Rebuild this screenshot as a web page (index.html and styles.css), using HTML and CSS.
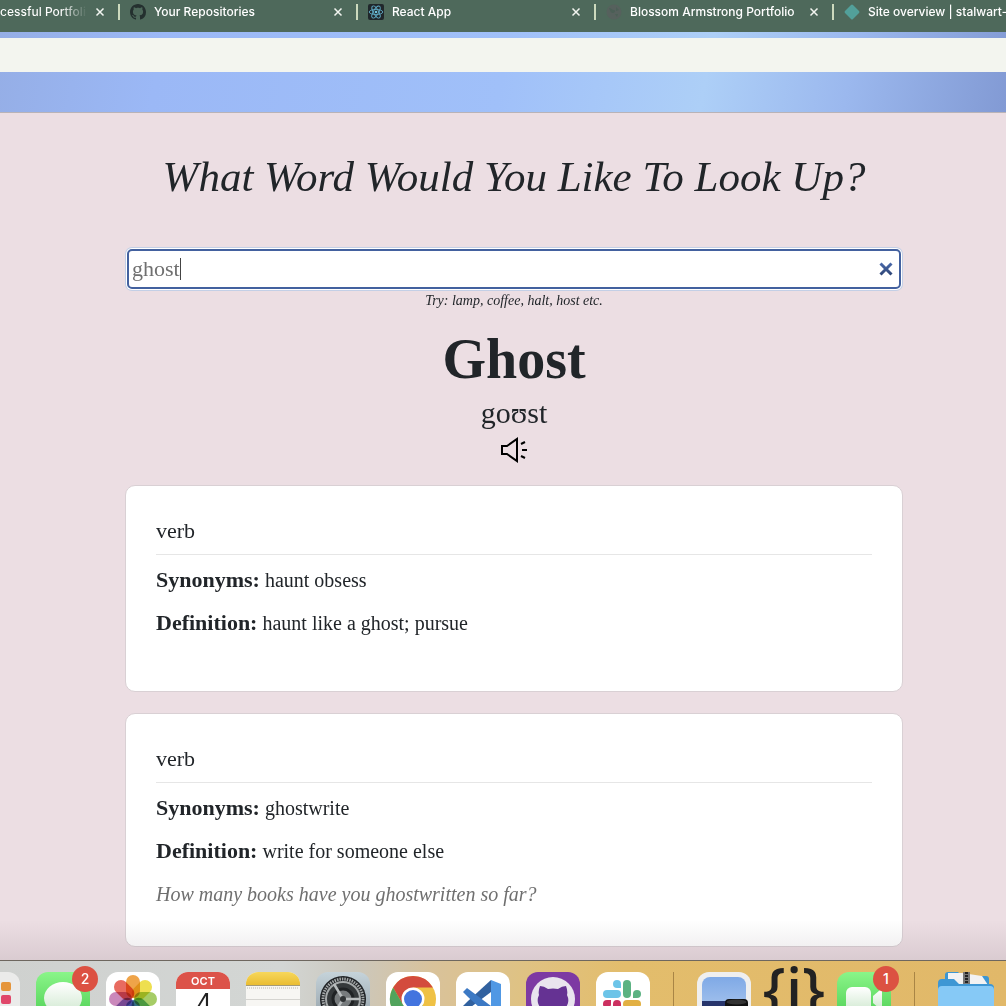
FILE: index.html
```html
<!DOCTYPE html>
<html lang="en">
<head>
<meta charset="utf-8">
<meta name="viewport" content="width=device-width, initial-scale=1">
<title>Dictionary</title>
<link rel="stylesheet" href="styles.css">
</head>
<body>
<nav class="tabs" aria-label="Browser tabs">
  <div class="tab tab-first">
    <a class="tab-title fade" href="#">cessful Portfolio</a>
    <button class="tab-close" aria-label="Close tab"><svg viewBox="0 0 10 10"><path d="M1.500 1.500l7 7M8.500 1.500l-7 7"/></svg></button>
  </div>
  <div class="tab">
    <svg class="favicon" viewBox="0 0 16 16"><path fill="#24302f" d="M8 0C3.580 0 0 3.580 0 8c0 3.540 2.290 6.530 5.470 7.590.4.070.55-.17.55-.38 0-.19-.01-.82-.01-1.490-2.010.37-2.530-.49-2.690-.94-.09-.23-.48-.94-.82-1.130-.28-.15-.68-.52-.01-.53.63-.01 1.080.58 1.230.82.72 1.210 1.870.87 2.330.66.070-.52.28-.87.51-1.070-1.780-.2-3.640-.89-3.640-3.950 0-.87.31-1.590.82-2.150-.08-.2-.36-1.020.08-2.120 0 0 .67-.21 2.200.82.64-.18 1.320-.27 2-.27s1.360.09 2 .27c1.530-1.040 2.200-.82 2.200-.82.44 1.100.16 1.920.08 2.120.51.56.82 1.270.82 2.150 0 3.070-1.870 3.750-3.650 3.950.29.25.54.73.54 1.480 0 1.070-.01 1.930-.01 2.200 0 .21.15.46.55.38A8.010 8.010 0 0 0 16 8c0-4.420-3.580-8-8-8z"/></svg>
    <a class="tab-title" href="#">Your Repositories</a>
    <button class="tab-close" aria-label="Close tab"><svg viewBox="0 0 10 10"><path d="M1.500 1.500l7 7M8.500 1.500l-7 7"/></svg></button>
  </div>
  <div class="tab">
    <svg class="favicon" viewBox="0 0 16 16"><rect width="16" height="16" rx="2" fill="#20272b"/><g fill="none" stroke="#5fa9c4" stroke-width=".9"><ellipse cx="8" cy="8" rx="6.800" ry="2.600"/><ellipse cx="8" cy="8" rx="6.800" ry="2.600" transform="rotate(60 8 8)"/><ellipse cx="8" cy="8" rx="6.800" ry="2.600" transform="rotate(120 8 8)"/></g><circle cx="8" cy="8" r="1.300" fill="#6fc3de"/></svg>
    <a class="tab-title" href="#">React App</a>
    <button class="tab-close" aria-label="Close tab"><svg viewBox="0 0 10 10"><path d="M1.500 1.500l7 7M8.500 1.500l-7 7"/></svg></button>
  </div>
  <div class="tab">
    <svg class="favicon" viewBox="0 0 16 16"><circle cx="8" cy="8" r="7.500" fill="#56615d"/><path d="M3 4c2 0 3 2 5 2s1 3-1 3-3-2-4-5zM10 3l3 3-3 1zM9 10l3 0-1 3z" fill="#4b5f56"/></svg>
    <a class="tab-title" href="#">Blossom Armstrong Portfolio</a>
    <button class="tab-close" aria-label="Close tab"><svg viewBox="0 0 10 10"><path d="M1.500 1.500l7 7M8.500 1.500l-7 7"/></svg></button>
  </div>
  <div class="tab tab-last">
    <svg class="favicon" viewBox="0 0 16 16"><path d="M7 1q1-1 2 0l6 6q1 1 0 2l-6 6q-1 1-2 0l-6-6q-1-1 0-2z" fill="#52a09a"/></svg>
    <a class="tab-title" href="#">Site overview | stalwart-s</a>
  </div>
</nav>
<div class="wallpaper"><div class="toolbar"></div></div>

<main class="page">
  <h1 class="title"><label for="word">What Word Would You Like To Look Up?</label></h1>
  <form class="search">
    <span class="field"><input id="word" type="text" value="ghost" autocomplete="off"><i class="caret"></i></span>
    <button class="clear" type="reset" aria-label="Clear"><svg viewBox="0 0 14 14"><defs><linearGradient id="cl" gradientUnits="userSpaceOnUse" x1="0" y1="0" x2="0" y2="14"><stop offset="0" stop-color="#4c6cae"/><stop offset="1" stop-color="#2b4272"/></linearGradient></defs><path d="M1.500 1.500l11 11M12.500 1.500l-11 11" stroke="url(#cl)" stroke-width="3"/></svg></button>
  </form>
  <p class="hint">Try: lamp, coffee, halt, host etc.</p>
  <h2 class="word">Ghost</h2>
  <p class="phonetic">goʊst</p>
  <button class="listen" aria-label="Listen"><svg viewBox="0 0 28 26"><path d="M2 9v8h5l10 7V2L7 9zM21 7l4-2M22 13h5M21 19l4 2" fill="none" stroke="#000" stroke-width="2"/></svg></button>

  <section class="card">
    <h3 class="part">verb</h3>
    <p class="row"><strong>Synonyms:</strong> haunt obsess</p>
    <p class="row"><strong>Definition:</strong> haunt like a ghost; pursue</p>
    <p class="row example"></p>
  </section>
  <section class="card">
    <h3 class="part">verb</h3>
    <p class="row"><strong>Synonyms:</strong> ghostwrite</p>
    <p class="row"><strong>Definition:</strong> write for someone else</p>
    <p class="row example">How many books have you ghostwritten so far?</p>
  </section>
</main>

<footer class="dock">
  <div class="app app-first"><svg viewBox="0 0 54 54"><rect width="54" height="54" rx="12" fill="#ebebea"/><rect x="35" y="10" width="10" height="9" rx="2" fill="#e5953b"/><rect x="35" y="23" width="10" height="9" rx="2" fill="#e0476a"/></svg></div>
  <div class="app"><svg viewBox="0 0 54 54"><defs><linearGradient id="gr" x2="0" y2="1"><stop stop-color="#8af589"/><stop offset="1" stop-color="#45c94b"/></linearGradient><linearGradient id="wh" x2="0" y2="1"><stop stop-color="#fff"/><stop offset="1" stop-color="#cfe8cf"/></linearGradient></defs><rect width="54" height="54" rx="12" fill="url(#gr)"/><ellipse cx="27" cy="26" rx="19" ry="16" fill="url(#wh)"/></svg><span class="badge">2</span></div>
  <div class="app"><svg viewBox="0 0 54 54"><rect width="54" height="54" rx="12" fill="#fff"/><g class="petals"><rect x="20" y="3" width="14" height="23" rx="7" fill="#ee9a35"/><rect x="20" y="3" width="14" height="23" rx="7" fill="#ecdc3c" transform="rotate(45 27 27)"/><rect x="20" y="3" width="14" height="23" rx="7" fill="#9cc755" transform="rotate(90 27 27)"/><rect x="20" y="3" width="14" height="23" rx="7" fill="#65b894" transform="rotate(135 27 27)"/><rect x="20" y="3" width="14" height="23" rx="7" fill="#6488cd" transform="rotate(180 27 27)"/><rect x="20" y="3" width="14" height="23" rx="7" fill="#8a78c0" transform="rotate(225 27 27)"/><rect x="20" y="3" width="14" height="23" rx="7" fill="#c47bb4" transform="rotate(270 27 27)"/><rect x="20" y="3" width="14" height="23" rx="7" fill="#e65b4f" transform="rotate(315 27 27)"/></g></svg></div>
  <div class="app calendar"><span class="month">OCT</span><span class="day">4</span></div>
  <div class="app"><svg viewBox="0 0 54 54"><defs><linearGradient id="ye" x2="0" y2="1"><stop stop-color="#f7d75b"/><stop offset="1" stop-color="#eabd32"/></linearGradient></defs><rect width="54" height="54" rx="12" fill="#f7f6f3"/><path d="M0 13v-1A12 12 0 0 1 12 0h30a12 12 0 0 1 12 12v1z" fill="url(#ye)"/><path d="M0 13.500h54" stroke="#a49b78"/><path d="M1 16h52" stroke="#bbb8ae" stroke-dasharray="1 1"/><path d="M0 27.500h54M0 41.500h54" stroke="#d5d4d0"/></svg></div>
  <div class="app"><svg viewBox="0 0 54 54"><defs><linearGradient id="st" x2="0" y2="1"><stop stop-color="#c5d3da"/><stop offset="1" stop-color="#8e9aa2"/></linearGradient></defs><rect width="54" height="54" rx="12" fill="url(#st)"/><circle cx="27" cy="27" r="23" fill="#202326"/><circle cx="27" cy="27" r="20" fill="none" stroke="#a4a8a9" stroke-width="3" stroke-dasharray="1.500 1"/><circle cx="27" cy="27" r="17" fill="#35393b" stroke="#a4a8a9" stroke-width="2"/><circle cx="27" cy="27" r="10" fill="#777b7d" stroke="#1f2224" stroke-width="3"/><path d="M27 27h17M27 27l-9-15M27 27l-9 15" stroke="#b8bcbd" stroke-width="2.500"/><circle cx="27" cy="27" r="3" fill="#303335"/></svg></div>
  <div class="app"><svg viewBox="0 0 54 54"><rect width="54" height="54" rx="12" fill="#fff"/><circle cx="27" cy="27" r="23" fill="#efc145"/><path d="M7.080 15.500A23 23 0 0 1 46.920 15.500H27L17.040 32.750z" fill="#d34b3d"/><path d="M7.080 15.500A23 23 0 0 0 27 50l9.960-17.250H17.040z" fill="#51a35c"/><circle cx="27" cy="27" r="11.500" fill="#fff"/><circle cx="27" cy="27" r="9" fill="#4374df"/></svg></div>
  <div class="app"><svg viewBox="0 0 54 54"><rect width="54" height="54" rx="12" fill="#fff"/><path d="M35 8L12 29l-5 5 4 4 28-21z" fill="#31619f"/><path d="M7 20l4-4 28 21-4 9L12 25z" fill="#3c79c4"/><path d="M35 8l10 4v30l-10 4z" fill="#5098e4"/></svg></div>
  <div class="app"><svg viewBox="0 0 54 54"><rect width="54" height="54" rx="12" fill="#7d39a3"/><circle cx="27" cy="27" r="22" fill="#e9e4ee"/><path d="M14 14q4 0 8 3 5-1 10 0 4-3 8-3 2 5 1 9 2 4 1 8-2 7-10 8v15H22V39q-8-1-10-8-1-4 1-8-1-4 1-9z" fill="#653293"/></svg></div>
  <div class="app"><svg viewBox="0 0 54 54"><rect width="54" height="54" rx="12" fill="#fff"/><path d="M25 16h-4a4 4 0 1 1 4-4z" fill="#6cc4e8"/><rect x="7" y="18" width="18" height="8" rx="4" fill="#6cc4e8"/><rect x="27" y="8" width="8" height="18" rx="4" fill="#5bb282"/><path d="M37 26v-4a4 4 0 1 1 4 4z" fill="#5bb282"/><path d="M15 28v4a4 4 0 1 1-4-4z" fill="#cc3060"/><rect x="17" y="28" width="8" height="18" rx="4" fill="#cc3060"/><rect x="27" y="28" width="18" height="8" rx="4" fill="#e2b043"/></svg></div>
  <div class="divider"></div>
  <div class="app"><svg viewBox="0 0 54 54"><defs><linearGradient id="sk" x2="0" y2="1"><stop stop-color="#7fa9e6"/><stop offset="1" stop-color="#b3cdf0"/></linearGradient></defs><rect width="54" height="54" rx="12" fill="#efefef"/><rect x="5" y="5" width="44" height="44" rx="8" fill="url(#sk)"/><path d="M5 29h44v20H5z" fill="#27356c"/><rect x="28" y="27" width="23" height="16" rx="4" fill="#111"/><ellipse cx="39.500" cy="30" rx="10" ry="2.500" fill="#333"/></svg></div>
  <div class="app braces">{i}</div>
  <div class="app"><svg viewBox="0 0 54 54"><rect width="54" height="54" rx="12" fill="url(#gr)"/><rect x="9" y="15" width="25" height="25" rx="6" fill="url(#wh)"/><path d="M36 24l7-6q2-1 2 1v17q0 2-2 1l-7-6z" fill="url(#wh)"/></svg><span class="badge">1</span></div>
  <div class="divider"></div>
  <div class="app folder"><svg viewBox="0 0 56 54"><path d="M7 12V3q0-3 3-3h10l4 4h24q3 0 3 3v5z" fill="#3c96d2"/><path d="M10 1h14l20 3 6 9H10z" fill="#f2f2f2"/><path d="M25 0h7v12h-7z" fill="#777"/><path d="M28.500 0v12" stroke="#222" stroke-width="3" stroke-dasharray="2 1"/><path d="M0 16v-5q0-4 4-4h12l5 5h31q4 0 4 4v4H0z" fill="#3e97d4"/><rect y="14" width="56" height="44" rx="4" fill="#86c9f6"/></svg></div>
</footer>
</body>
</html>
```
FILE: styles.css
```css
* { box-sizing: border-box; }

body {
  margin: 0;
  height: 100vh;
  display: flex;
  flex-direction: column;
  overflow: hidden;
  font-family: "Liberation Serif", serif;
  color: #212529;
}

button {
  padding: 0;
  border: 0;
  background: none;
  display: block;
}

svg { display: block; }

/* Browser tab strip */
.tabs {
  flex: none;
  height: 32px;
  display: flex;
  overflow: hidden;
  background: #4e695b;
  font: 500 12px/16px Roboto, sans-serif;
}

.tab {
  flex: none;
  width: 238px;
  height: 16px;
  margin-top: 4px;
  padding: 0 13px 0 10px;
  display: flex;
  align-items: center;
  gap: 8px;
  border-left: 2px solid #ccd9bd;
}

.tab-first {
  width: 118px;
  padding-left: 0;
  border-left: 0;
}

.tab-last {
  flex: 1;
  min-width: 0;
  padding-right: 0;
}

.favicon { flex: none; width: 16px; height: 16px; }

.tab-title {
  flex: 1;
  min-width: 0;
  overflow: hidden;
  white-space: nowrap;
  color: #fff;
  text-decoration: none;
  font: 500 12px/16px Inter, sans-serif;
}

.fade {
  background: linear-gradient(90deg, #fff 70%, #4e695b);
  background-clip: text;
  color: transparent;
}

.tab-close svg {
  width: 10px;
  height: 10px;
  fill: none;
  stroke: #f2f5f0;
  stroke-width: 1.5;
}

.wallpaper {
  flex: none;
  height: 81px;
  padding-top: 6px;
  border-bottom: 1px solid #b9b3b7;
  background: linear-gradient(100deg, #95aee6, #9bb8f6 16%, #a0c0f9 50%, #adcff7 70%, #9bb8ee 84%, #829ad4);
}

.toolbar { height: 34px; background: #f3f5ef; }

/* Dictionary page */
.page {
  position: relative;
  flex: 1;
  min-height: 0;
  overflow: hidden;
  padding: 40px 103px 0 125px;
  background: #ecdee3;
}

.page::after {
  content: "";
  position: absolute;
  inset: auto 0 0;
  height: 40px;
  background: linear-gradient(transparent, rgba(60, 40, 50, .1));
}

.title {
  margin: 0 0 48px;
  font-size: 43px;
  line-height: 48px;
  font-weight: 400;
  font-style: italic;
  text-align: center;
  white-space: nowrap;
}

.search {
  height: 40px;
  margin: 0 2px;
  padding: 0 6px 0 3px;
  display: flex;
  align-items: center;
  border: 2px solid #43619f;
  border-radius: 5px;
  background: #fff;
  box-shadow: 0 0 0 1px #fff, 0 0 0 2px #c3cfe6;
}

.field { position: relative; flex: 1; }

.field input {
  width: 100%;
  padding: 0;
  border: 0;
  outline: 0;
  background: none;
  color: #707070;
  font: 22px/24px "Liberation Serif", serif;
}

.caret {
  position: absolute;
  left: 48px;
  top: 1px;
  width: 1px;
  height: 22px;
  background: #444;
}

.clear svg { width: 14px; height: 14px; }

.hint {
  margin: 4px 0 0;
  font-size: 14px;
  line-height: 16px;
  font-style: italic;
  text-align: center;
}

.word {
  margin: 20px 0 0;
  font-size: 56px;
  line-height: 60px;
  text-align: center;
}

.phonetic {
  margin: 8px 0;
  font-size: 30px;
  line-height: 32px;
  text-align: center;
}

.listen { margin: 0 auto 22px; }
.listen svg { width: 28px; height: 26px; }

.card {
  display: flex;
  flex-direction: column;
  margin-bottom: 21px;
  padding: 30px 30px 22px;
  border: 1px solid #d9d0d4;
  border-radius: 10px;
  background: #fff;
}

.part {
  margin: 0 0 12px;
  padding-bottom: 8px;
  border-bottom: 1px solid #e6e6e6;
  font-size: 22px;
  line-height: 30px;
  font-weight: 400;
}

.row {
  margin: 0 0 16px;
  font-size: 20px;
  line-height: 27px;
}

.row strong { font-size: 22px; line-height: 24px; }

.example { font-style: italic; color: #6f6f6f; }

/* Dock */
.dock {
  flex: none;
  height: 46px;
  padding-top: 11px;
  display: flex;
  gap: 16px;
  overflow: hidden;
  border-top: 1px solid #6e675f;
  background: linear-gradient(95deg, #cfd1cf, #d3d6d4 28%, #cbc8be 35%, #d9c29a 43%, #dfc283 52%, #e3bd6c 62%, #e1b869);
}

.app { position: relative; flex: none; width: 54px; height: 54px; }
.app svg { width: 54px; height: 54px; }
.app-first { margin-left: -34px; }
.petals { isolation: isolate; }
.petals rect { mix-blend-mode: multiply; opacity: .9; }

.badge {
  position: absolute;
  top: -6px;
  right: -8px;
  width: 26px;
  height: 26px;
  border-radius: 50%;
  background: #dc5142;
  color: #fff;
  font: 500 14px/26px Inter, sans-serif;
  text-align: center;
}

.calendar {
  overflow: hidden;
  border-radius: 12px;
  background: #fff;
  text-align: center;
  font-family: Inter, sans-serif;
}

.month {
  display: block;
  height: 17px;
  background: #dc5349;
  color: #fff;
  font-size: 11px;
  line-height: 18px;
  font-weight: 600;
}

.day {
  display: block;
  color: #222;
  font-size: 32px;
  line-height: 34px;
  font-weight: 300;
}

.braces {
  display: flex;
  justify-content: center;
  color: #222;
  font: 500 60px/32px "Noto Sans", sans-serif;
}

.divider { flex: none; width: 1px; height: 40px; margin: 0 7px; background: #a98545; }
.folder, .folder svg { width: 56px; }
```
